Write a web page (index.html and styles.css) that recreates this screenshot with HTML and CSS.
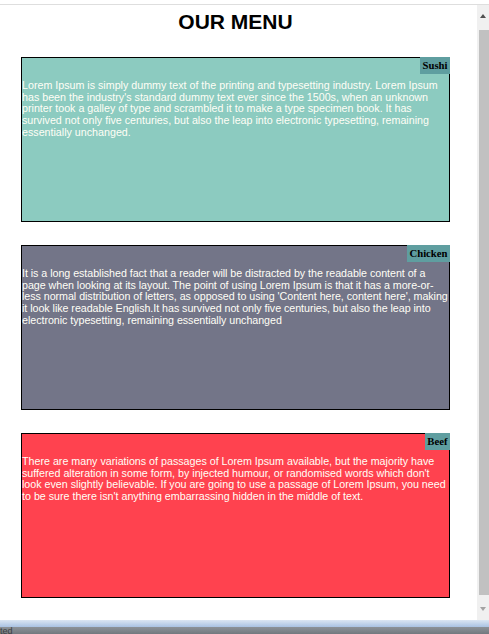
FILE: index.html
```html
<!DOCTYPE html>
<html>
<head>
<meta charset="utf-8">
<title>Our Menu</title>
<link rel="stylesheet" href="styles.css">
</head>
<body>
<div class="window">
  <div class="topbar"></div>
  <div class="viewport">
    <main class="page">
      <h1 class="title">OUR MENU</h1>
      <section class="card card-sushi">
        <span class="tag">Sushi</span>
        <p class="desc">Lorem Ipsum is simply dummy text of the printing and typesetting industry. Lorem Ipsum has been the industry's standard dummy text ever since the 1500s, when an unknown printer took a galley of type and scrambled it to make a type specimen book. It has survived not only five centuries, but also the leap into electronic typesetting, remaining essentially unchanged.</p>
      </section>
      <section class="card card-chicken">
        <span class="tag">Chicken</span>
        <p class="desc desc-tight">It is a long established fact that a reader will be distracted by the readable content of a page when looking at its layout. The point of using Lorem Ipsum is that it has a more-or-less normal distribution of letters, as opposed to using 'Content here, content here', making it look like readable English.It has survived not only five centuries, but also the leap into electronic typesetting, remaining essentially unchanged</p>
      </section>
      <section class="card card-beef">
        <span class="tag">Beef</span>
        <p class="desc">There are many variations of passages of Lorem Ipsum available, but the majority have suffered alteration in some form, by injected humour, or randomised words which don't look even slightly believable. If you are going to use a passage of Lorem Ipsum, you need to be sure there isn't anything embarrassing hidden in the middle of text.</p>
      </section>
    </main>
    <div class="scrollbar">
      <div class="arrow arrow-up"></div>
      <div class="track"><div class="thumb"></div></div>
      <div class="arrow arrow-down"></div>
    </div>
  </div>
  <div class="statusbar">
    <div class="status-blue"></div>
    <div class="status-gray">ted</div>
  </div>
</div>
</body>
</html>
```

FILE: styles.css
```css
html, body {
  margin: 0;
  padding: 0;
  background: #fff;
}

.window {
  width: 489px;
  height: 634px;
  display: flex;
  flex-direction: column;
  overflow: hidden;
  font-family: "Liberation Sans", Arial, sans-serif;
}

.topbar {
  height: 4px;
  border-bottom: 1px solid #dedede;
  background: #fff;
  flex: none;
}

.viewport {
  height: 615px;
  flex: none;
  display: flex;
  overflow: hidden;
}

.page {
  width: 477px;
  flex: none;
  padding: 0 0 0 21px;
  box-sizing: border-box;
  overflow: hidden;
}

.title {
  width: 429px;
  margin: 5px 0 23px;
  text-align: center;
  font-size: 21px;
  font-weight: bold;
  line-height: 24px;
  color: #000;
}

.card {
  position: relative;
  width: 429px;
  height: 165px;
  box-sizing: border-box;
  border: 1px solid #000;
  margin-bottom: 23px;
}

.card-sushi { background: #8ccbc0; }
.card-chicken { background: #737588; }
.card-beef { background: #ff424f; }

.tag {
  position: absolute;
  top: -1px;
  right: -1px;
  background: #5f9ea0;
  color: #000;
  font-family: "Liberation Serif", "Times New Roman", serif;
  font-weight: bold;
  font-size: 10.7px;
  line-height: 11px;
  padding: 3px 2.5px;
}

.desc {
  margin: 22px 0 0;
  font-size: 10.7px;
  line-height: 11.7px;
  color: #fffef6;
}

.desc-tight {
  letter-spacing: -0.04px;
}

.scrollbar {
  width: 12px;
  flex: none;
  background: #f0f0f0;
  display: flex;
  flex-direction: column;
}

.arrow {
  height: 22px;
  flex: none;
  display: flex;
  align-items: center;
  justify-content: center;
}

.arrow-up::before {
  content: "";
  border-left: 3.5px solid transparent;
  border-right: 3.5px solid transparent;
  border-bottom: 4px solid #505050;
}

.arrow-down::before {
  content: "";
  border-left: 3.5px solid transparent;
  border-right: 3.5px solid transparent;
  border-top: 4px solid #a3a3a3;
}

.track {
  flex: 1;
  display: flex;
  padding-left: 2px;
}

.thumb {
  flex: 1;
  margin: 3px 0 3px;
  background: #c1c1c1;
}

.statusbar {
  flex: 1;
  display: flex;
  flex-direction: column;
}

.status-blue {
  height: 7px;
  flex: none;
  background: linear-gradient(#dbe6f3, #a9c2e2);
}

.status-gray {
  flex: 1;
  background: linear-gradient(#8c9298, #6f757b);
  color: #3c3f42;
  font-size: 9px;
  line-height: 8px;
  padding-left: 0;
  overflow: hidden;
}
```
